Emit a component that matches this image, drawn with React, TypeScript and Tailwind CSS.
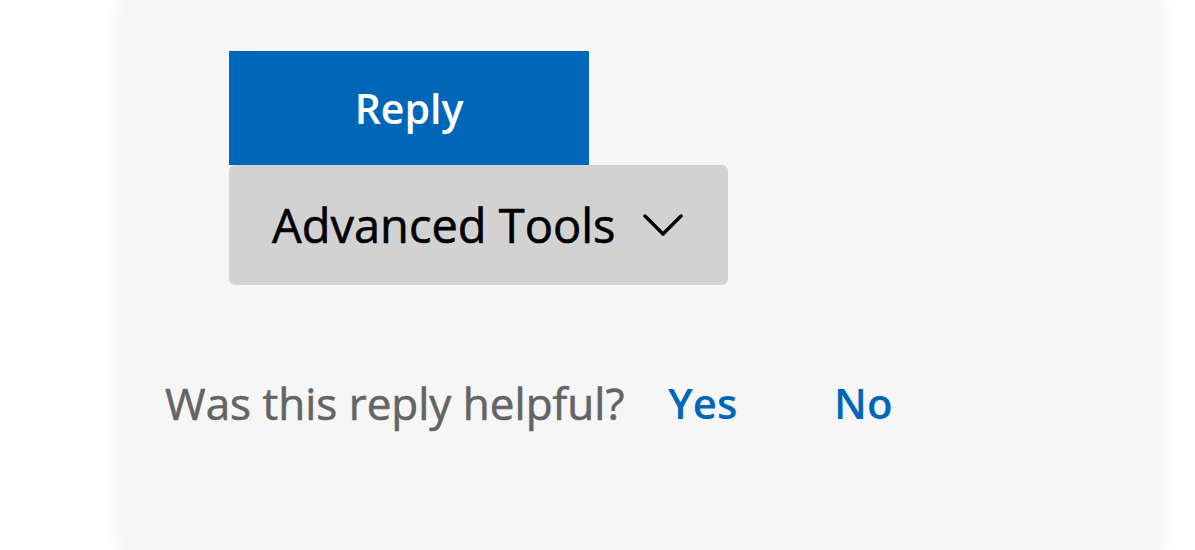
import React from "react";

export default function App() {
  return (
    <div className="w-[1195px] h-[550px] bg-white flex overflow-hidden" style={{ fontFamily: '"Open Sans", "Noto Sans", sans-serif' }}>
      <div className="ml-[122px] w-[1038px] h-full bg-[#f6f6f6] shadow-[0_0_22px_rgba(0,0,0,0.07)] flex flex-col">
        <div className="pt-[51px] pl-[107px] flex flex-col items-start">
          <button className="w-[360px] h-[114px] bg-[#0067b8] text-white text-[41px] font-semibold flex items-center justify-center leading-none">
            Reply
          </button>
          <button className="w-[499px] h-[120px] bg-[#d2d2d2] rounded-md flex items-center pl-[43px] text-black text-[47px] leading-none [-webkit-text-stroke:0.6px_#000]">
            <span className="w-[344px] text-left whitespace-nowrap">Advanced Tools</span>
            <svg className="ml-[27px]" width="40" height="24" viewBox="0 0 40 24" fill="none">
              <path d="M2 3 L20 21 L38 3" stroke="#000" strokeWidth="3.4" strokeLinecap="round" strokeLinejoin="round" />
            </svg>
          </button>
        </div>
        <div className="mt-[90px] pl-[43px] flex items-center h-[56px] text-[44px] leading-none">
          <span className="w-[460px] whitespace-nowrap text-[#646464] [-webkit-text-stroke:0.6px_#646464]">Was this reply helpful?</span>
          <span className="ml-[43px] w-[68px] whitespace-nowrap text-[#0067b8] font-semibold text-[42px]">Yes</span>
          <span className="ml-[98px] whitespace-nowrap text-[#0067b8] font-semibold text-[42px]">No</span>
        </div>
      </div>
    </div>
  );
}
